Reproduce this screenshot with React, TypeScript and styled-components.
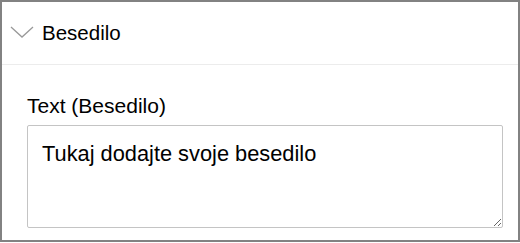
import React from 'react';
import styled, { createGlobalStyle } from 'styled-components';

const GlobalStyle = createGlobalStyle`
  html, body {
    margin: 0;
    padding: 0;
    background: #ffffff;
  }
  body {
    font-family: "Liberation Sans", Arial, sans-serif;
    color: #000000;
  }
`;

const Panel = styled.div`
  box-sizing: border-box;
  width: 520px;
  height: 242px;
  border: 2px solid #828282;
  background: #ffffff;
  display: flex;
  flex-direction: column;
`;

const SectionHeader = styled.div`
  display: flex;
  align-items: center;
  height: 62px;
  padding: 0 0 0 8px;
  border-bottom: 1px solid #ececec;
  font-size: 20.5px;
`;

const Chevron = styled.svg`
  width: 24px;
  height: 14px;
  margin-right: 8px;
  margin-top: -3px;
`;

const Body = styled.div`
  padding: 29px 16px 0 25px;
  display: flex;
  flex-direction: column;
`;

const Label = styled.label`
  font-size: 21px;
  line-height: 24px;
  margin-bottom: 7px;
`;

const TextBox = styled.textarea`
  box-sizing: border-box;
  width: 476px;
  height: 103px;
  border: 1px solid #c4c4c4;
  border-radius: 2px;
  padding: 15px 14px;
  font-family: "Liberation Sans", Arial, sans-serif;
  font-size: 21.8px;
  line-height: 26px;
  color: #000000;
  resize: both;
  outline: none;
`;

const App: React.FC = () => {
  return (
    <>
      <GlobalStyle />
      <Panel>
        <SectionHeader>
          <Chevron viewBox="0 0 24 14">
            <path d="M1 2 L12 12 L23 2" fill="none" stroke="#999999" strokeWidth="1.3" />
          </Chevron>
          <span>Besedilo</span>
        </SectionHeader>
        <Body>
          <Label htmlFor="besedilo">Text (Besedilo)</Label>
          <TextBox id="besedilo" defaultValue="Tukaj dodajte svoje besedilo" />
        </Body>
      </Panel>
    </>
  );
};

export default App;
